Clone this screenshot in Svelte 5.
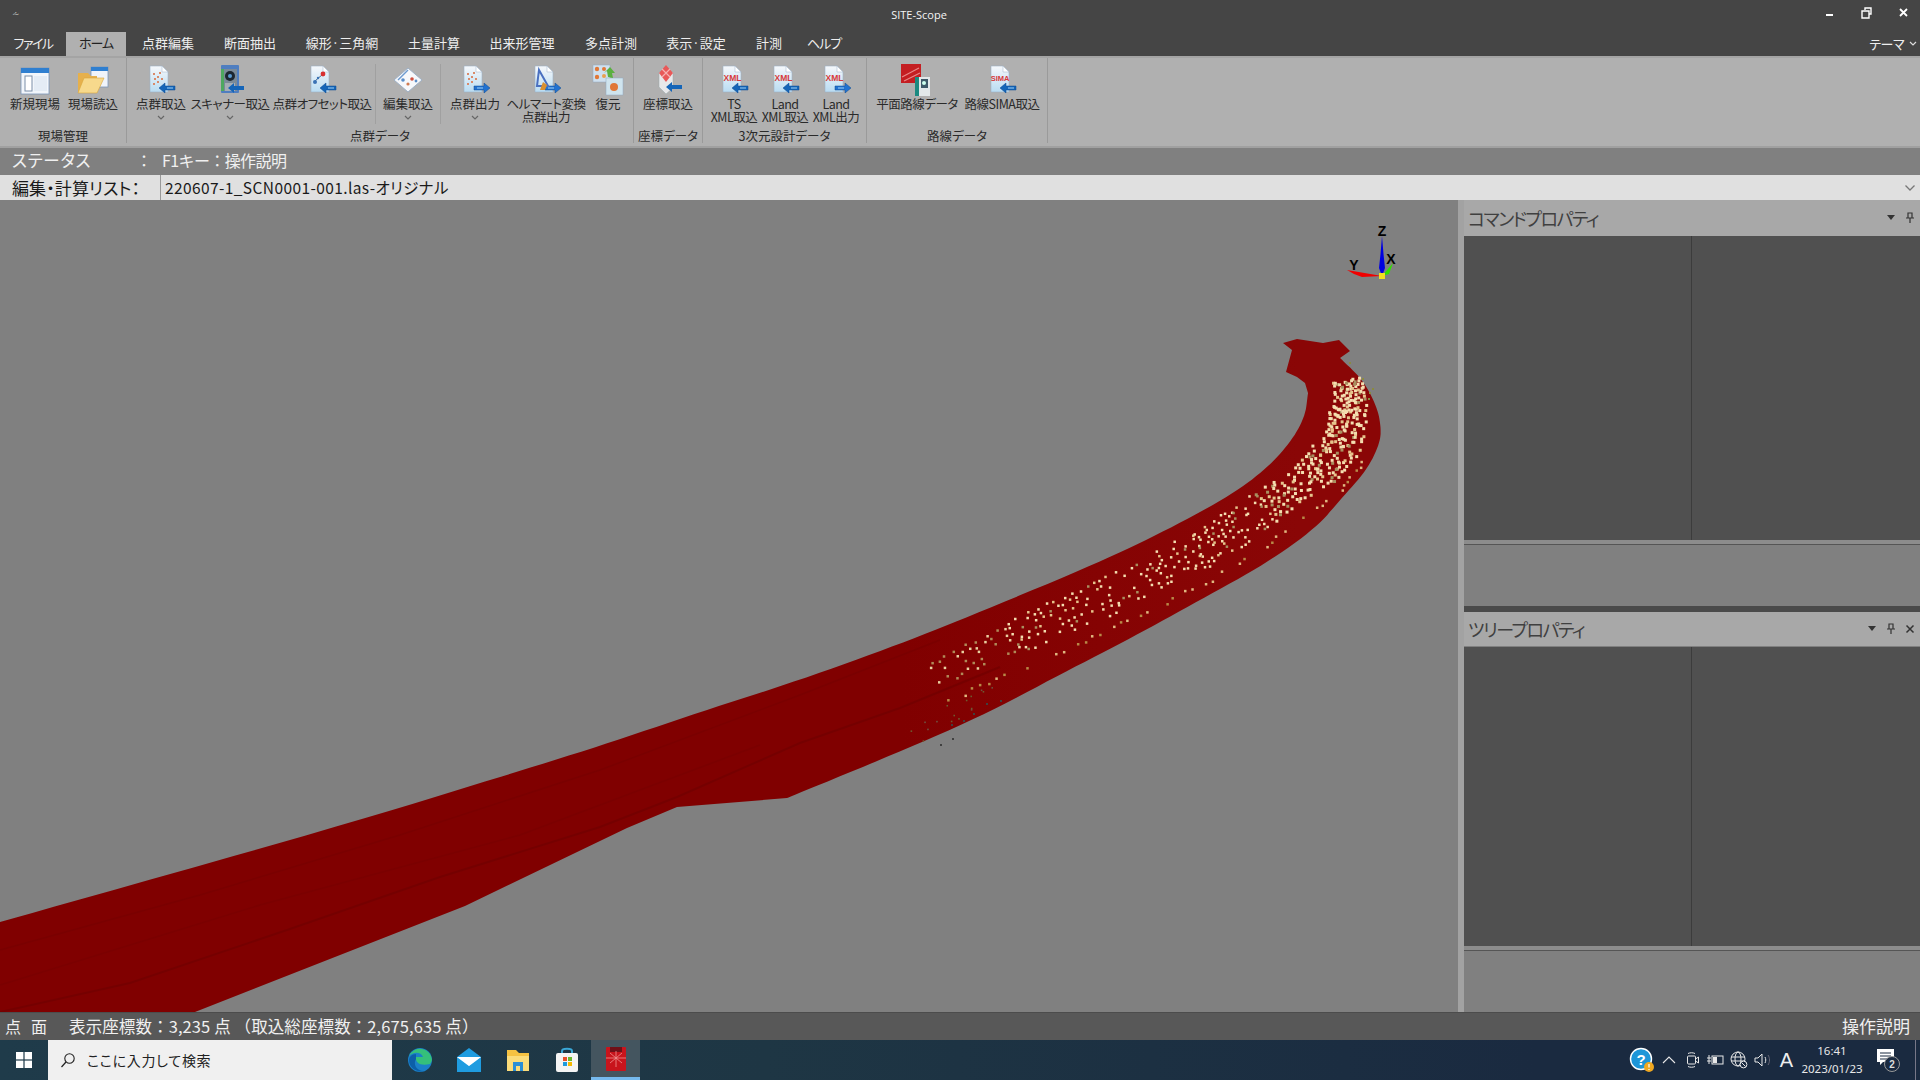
<script>
  const menu = [
    {t:'ファイル',w:66,n:1},{t:'ホーム',w:60,n:1},{t:'点群編集',w:84},{t:'断面抽出',w:80},{t:'線形·三角網',w:104},
    {t:'土量計算',w:80},{t:'出来形管理',w:96},{t:'多点計測',w:82},{t:'表示·設定',w:88},{t:'計測',w:58},{t:'ヘルプ',w:52,n:1}
  ];
  const groups = [
    { label:'現場管理', w:127, pad:6, items:[
      {w:58,k:'new',l:['新規現場']},{w:58,k:'open',l:['現場読込']}]},
    { label:'点群データ', w:507, pad:6, items:[
      {w:56,k:'cloudIn',l:['点群取込'],c:1},{w:82,k:'scan',l:['スキャナー取込'],c:1,t:1},{w:102,k:'offset',l:['点群オフセット取込'],t:1},
      {sep:1},{w:60,k:'edit',l:['編集取込'],c:1},{sep:1},{w:64,k:'cloudOut',l:['点群出力'],c:1},
      {w:78,k:'helm',l:['ヘルマート変換','点群出力'],t:1},{w:46,k:'restore',l:['復元']}]},
    { label:'座標データ', w:69, pad:4, items:[{w:60,k:'coord',l:['座標取込']}]},
    { label:'3次元設計データ', w:164, pad:6, items:[
      {w:50,k:'xmlIn',l:['TS','XML取込'],t:1},{w:52,k:'xmlIn',l:['Land','XML取込'],t:1},{w:50,k:'xmlOut',l:['Land','XML出力'],t:1}]},
    { label:'路線データ', w:181, pad:4, items:[{w:92,k:'plan',l:['平面路線データ'],t:1},{w:78,k:'sima',l:['路線SIMA取込'],t:1}]}
  ];

  const P = a => a.map(p => p.join(',')).join(' ');
  const chaikin = (pts, n = 3) => {
    let a = pts;
    for (let r = 0; r < n; r++) {
      const out = [a[0]];
      for (let i = 0; i < a.length - 1; i++) {
        const [x0,y0] = a[i], [x1,y1] = a[i+1];
        out.push([x0*.75+x1*.25, y0*.75+y1*.25], [x0*.25+x1*.75, y0*.25+y1*.75]);
      }
      out.push(a[a.length-1]);
      a = out;
    }
    return a.map(([x,y]) => [+x.toFixed(1), +y.toFixed(1)]);
  };
  const top = chaikin([[0,922],[344,825],[500,777],[600,746],[700,712],[800,680],[900,644],[980,612],[1100,562],[1167,530],[1233,494],[1267,468],[1290,443],[1305,417],[1308,393]]);
  const head = [[1305,383],[1297,377],[1286,372],[1292,350],[1283,343],[1297,339],[1323,343],[1339,340],[1350,351],[1340,358]];
  const bottom = chaikin([[1340,358],[1363,380],[1377,407],[1381,427],[1380,443],[1367,470],[1340,500],[1317,527],[1267,563],[1200,600],[1133,637],[1063,673],[980,717],[880,760],[787,798]]);
  const tail = [[677,807],[627,828],[465,906],[195,1012],[0,1012]];
  const road = P([...top, ...head, ...bottom, ...tail]);
  const streak1 = P([[0,1012],[130,983],[287,930],[440,877],[600,827],[677,797],[800,743],[900,708],[1000,667]]);
  const streak2 = P([[0,950],[200,895],[400,835],[600,770],[800,695],[940,640]]);
  const streak3 = P([[0,985],[260,905],[520,835],[760,745]]);

  let seed = 12345;
  const rnd = () => (seed = (seed * 16807) % 2147483647) / 2147483647;
  const line = [[935,672],[1013,637],[1113,593],[1200,550],[1267,507],[1317,470],[1343,437],[1350,410],[1345,380]];
  const half = [13,17,18,18,18,19,19,14];
  const dots = [];
  const total = line.length - 1;
  for (let i = 0; i < total; i++) {
    const [x0,y0] = line[i], [x1,y1] = line[i+1];
    const dx = x1-x0, dy = y1-y0, len = Math.hypot(dx,dy), nx = -dy/len, ny = dx/len;
    const f = i / (total - 1);
    const ds = 8 - 5*f, dw = 6 - 2.5*f, keep = .55 + .25*f;
    for (let s = 0; s < len; s += ds) {
      for (let o = -half[i]; o <= half[i]; o += dw) {
        if (rnd() > keep) continue;
        const px = x0 + dx*s/len + nx*o + (rnd()-.5)*5;
        const py = y0 + dy*s/len + ny*o + (rnd()-.5)*4;
        const r = rnd();
        const fill = i < 1 ? (r<.5?'#b08a58':'#e8d0a0') : r<.7?'#f4deb0':r<.88?'#e6c48c':'#a89060';
        dots.push({x:px, y:py, s:i>3?3:2.5, fill});
      }
    }
    if (i < 6) {
      for (let s = 0; s < len; s += ds*1.1) {
        if (rnd() > .6) continue;
        const o = 28 + rnd()*5;
        dots.push({x:x0+dx*s/len+nx*o, y:y0+dy*s/len+ny*o, s:2.5, fill:rnd()<.5?'#b88a48':'#e0b880'});
      }
    }
  }
  for (let j = 0; j < 16; j++) {
    const t = rnd();
    dots.push({x:905+t*85+rnd()*14, y:735-t*48+rnd()*20-10, s:1.6, fill:rnd()<.5?'#6e5a30':'#705040'});
  }
  const outer = [[940,744],[952,738],[951,724],[963,720],[973,713],[986,703],[1000,700],[1349,362],[1362,378],[1369,392],[1372,388],[1368,398]];
  for (const [x,y] of outer) dots.push({x,y,s:2,fill:x<1100?'#404040':'#8a8a40'});
  const windows = [[0,0],[1,0],[0,1],[1,1]];
</script>

{#snippet doc(arrow)}
  <path d="M5 2h12l6 6v20H5z" fill="url(#docg)" stroke="#9fb3c8" stroke-width=".6"/>
  <path d="M17 2v6h6z" fill="#fff" stroke="#9fb3c8" stroke-width=".5"/>
  {#if arrow === 'in'}
    <path d="M14 24l6-5v3h10v4H20v3z" fill="#1565b8" stroke="#0d4a90" stroke-width=".5"/>
    <path d="M22 24h6" stroke="#9cd0f5" stroke-width="1"/>
  {:else}
    <path d="M31 24l-6-5v3H15v4h10v3z" fill="#2272d0" stroke="#0d4a90" stroke-width=".5"/>
    <path d="M18 24h6" stroke="#9cd0f5" stroke-width="1"/>
  {/if}
{/snippet}

{#snippet icon(k)}
  <svg class="ic" viewBox="0 0 32 32" width="32" height="32">
    {#if k === 'new'}
      <rect x="2" y="4" width="28" height="26" fill="#f2f6fb" stroke="#7c97b8" stroke-width=".8"/>
      <rect x="2" y="4" width="28" height="5" fill="#2f7fd0"/>
      <rect x="6" y="12" width="7" height="15" fill="#fff" stroke="#7a8ea8"/>
      <rect x="15" y="12" width="13" height="15" fill="#e4ecf5"/>
    {:else if k === 'open'}
      <rect x="14" y="3" width="17" height="20" fill="#f0f4fa" stroke="#7c97b8" stroke-width=".8"/>
      <rect x="14" y="3" width="17" height="4" fill="#2f7fd0"/>
      <path d="M1 9h10l3 3h6v16H1z" fill="#e6b04c"/>
      <path d="M1 29l6-15h20l-7 15z" fill="#f7d98c" stroke="#d8a63c" stroke-width=".6"/>
    {:else if k === 'cloudIn' || k === 'cloudOut'}
      {@render doc(k === 'cloudIn' ? 'in' : 'out')}
      <g fill="#d98a6a"><rect x="8" y="9" width="2" height="2"/><rect x="12" y="12" width="2" height="2"/><rect x="9" y="14" width="2" height="2"/><rect x="14" y="8" width="2" height="2"/><rect x="16" y="14" width="2" height="2"/><rect x="8" y="19" width="2" height="2"/><rect x="12" y="17" width="2" height="2"/></g>
    {:else if k === 'scan'}
      <rect x="7" y="1" width="18" height="28" rx="1" fill="#4f7ec0"/>
      <rect x="7" y="5" width="3" height="22" fill="#4da860"/>
      <rect x="10" y="5" width="13" height="22" fill="#7a8a98"/>
      <circle cx="16" cy="12" r="5" fill="#1c2630"/><circle cx="16" cy="12" r="2" fill="#5a9ad0"/>
      <rect x="11" y="19" width="10" height="8" fill="#a5adb5"/>
      <path d="M14 24l6-5v3h10v4H20v3z" fill="#1565b8"/>
    {:else if k === 'offset'}
      {@render doc('in')}
      <path d="M9 17l8-7" stroke="#4a6a90" stroke-width="1"/>
      <circle cx="9" cy="18" r="2" fill="#3a72b5"/><circle cx="17" cy="10" r="2.4" fill="#d83030"/><circle cx="12" cy="14" r="1.2" fill="#3a72b5"/>
    {:else if k === 'edit'}
      <path d="M16 4L30 16 16 28 2 16z" fill="#f6f8fb" stroke="#9db0c6"/>
      <path d="M16 6L6 16" stroke="#6c9ad0" stroke-width="1.5"/>
      <circle cx="11" cy="16" r="1.8" fill="#5c8ec8"/><circle cx="20" cy="15" r="1.8" fill="#d05040"/><circle cx="16" cy="20" r="1.6" fill="#d07a50"/><circle cx="24" cy="17" r="1.4" fill="#5c8ec8"/>
    {:else if k === 'helm'}
      {@render doc('out')}
      <path d="M9 6l9 16H7z" fill="none" stroke="#4a70c0" stroke-width="2"/>
      <path d="M10 26l3-8 4 3-2 5z" fill="#d89030"/>
    {:else if k === 'restore'}
      <rect x="1" y="1" width="17" height="17" fill="#cfe0ee" stroke="#90a8c0" stroke-width=".5"/>
      <circle cx="5" cy="5" r="2.2" fill="#e07838"/><circle cx="12" cy="5" r="2" fill="#e07838"/><circle cx="5" cy="13" r="2.2" fill="#e07838"/><circle cx="12" cy="12" r="2" fill="#e8a050"/>
      <rect x="14" y="14" width="17" height="17" fill="#cfe4ee" stroke="#90a8c0" stroke-width=".5"/>
      <circle cx="22" cy="23" r="4" fill="#e07838"/>
      <path d="M16 13l-1-6 -3 2 6-6 5 6h-3l1 5z" fill="#5ab040"/>
    {:else if k === 'coord'}
      <path d="M7 8h14v16l-7 6-7-7z" fill="#e8e8ea" stroke="#9aa" stroke-width=".5"/>
      <path d="M14 1l7 8-7 9-7-9z" fill="#e85858"/><path d="M10 5l8 8M18 5l-8 8" stroke="#f6b0b0" stroke-width="1.2"/>
      <path d="M14 23l6-5v3h10v4H20v3z" fill="#1565b8"/>
    {:else if k === 'xmlIn' || k === 'xmlOut'}
      {@render doc(k === 'xmlIn' ? 'in' : 'out')}
      <text x="14.5" y="17" class="svgt" text-anchor="middle">XML</text>
    {:else if k === 'sima'}
      {@render doc('in')}
      <text x="14" y="17" class="svgt sm" text-anchor="middle">SIMA</text>
    {:else if k === 'plan'}
      <rect x="0" y="0" width="20" height="19" fill="#c41e22"/>
      <path d="M1 13L18 4M3 17L19 9" stroke="#e88888" stroke-width="1.2"/>
      <rect x="14" y="13" width="15" height="19" fill="#e2e8ea"/>
      <rect x="14" y="13" width="4" height="19" fill="#1c8a80"/>
      <rect x="20" y="15" width="7" height="9" fill="#3c5868"/>
      <circle cx="23" cy="19" r="2" fill="#cfe"/>
    {/if}
  </svg>
{/snippet}

<svg class="defs" width="0" height="0" aria-hidden="true">
  <defs>
    <linearGradient id="docg" x1="0" y1="0" x2="0" y2="1"><stop offset="0" stop-color="#f6f8fb"/><stop offset="1" stop-color="#b9dcf2"/></linearGradient>
    <linearGradient id="roadg" gradientUnits="userSpaceOnUse" x1="900" y1="0" x2="1300" y2="0"><stop offset="0" stop-color="#800000"/><stop offset="1" stop-color="#8a0606"/></linearGradient>
  </defs>
</svg>

<div class="app">
  <header class="title">
    <span class="qa">⩪</span>
    <span class="name">SITE-Scope</span>
    <div class="winctl">
      <svg viewBox="0 0 12 12" width="12" height="12"><path d="M2 8h7" stroke="#fff" stroke-width="2"/></svg>
      <svg viewBox="0 0 12 12" width="12" height="12"><path d="M4 3V1h6v6H8M1 4h7v7H1z" fill="none" stroke="#fff" stroke-width="1.4"/></svg>
      <svg viewBox="0 0 12 12" width="12" height="12"><path d="M2 2l7 7M9 2l-7 7" stroke="#fff" stroke-width="1.8"/></svg>
    </div>
  </header>

  <nav class="menu">
    {#each menu as m, i}
      <span class="tab" class:active={i === 1} class:narrow={m.n} style:width="{m.w}px">{m.t}</span>
    {/each}
    <span class="theme">テーマ <svg viewBox="0 0 8 6" width="8" height="6"><path d="M1 1l3 3 3-3" fill="none" stroke="#ddd" stroke-width="1.2"/></svg></span>
  </nav>

  <section class="ribbon">
    {#each groups as g}
      <div class="group" style:width="{g.w}px">
        <div class="btns" style:padding-left="{g.pad}px">
          {#each g.items as b}
            {#if b.sep}
              <i class="sep"></i>
            {:else}
              <div class="btn" style:width="{b.w}px">
                {@render icon(b.k)}
                <span class="bl" class:tight={b.t}>{#each b.l as t, n}{#if n}<br/>{/if}{t}{/each}</span>
                {#if b.c}
                  <svg class="chev" viewBox="0 0 8 6" width="8" height="6"><path d="M1 1l3 3 3-3" fill="none" stroke="#666" stroke-width="1.2"/></svg>
                {/if}
              </div>
            {/if}
          {/each}
        </div>
        <div class="gl">{g.label}</div>
      </div>
    {/each}
  </section>

  <div class="stat">
    <span class="k">ステータス</span><span class="c">&#xFF1A;</span><span class="v">F1キー&#xFF1A;操作説明</span>
  </div>
  <div class="list">
    <span class="lk">編集・計算リスト&#xFF1A;</span>
    <span class="lv">220607-1_SCN0001-001.las-オリジナル</span>
    <svg viewBox="0 0 12 8" width="12" height="8"><path d="M1.5 1.5L6 6l4.5-4.5" fill="none" stroke="#777" stroke-width="1.3"/></svg>
  </div>

  <main class="work">
    <div class="view">
      <svg class="scene" viewBox="0 200 1458 812" width="1458" height="812">
        <polygon points={road} fill="url(#roadg)"/>
        <polyline points={streak1} fill="none" stroke="#6e0000" stroke-width="2" opacity=".6"/>
        <polyline points={streak2} fill="none" stroke="#740000" stroke-width="1.5" opacity=".5"/>
        <polyline points={streak3} fill="none" stroke="#760000" stroke-width="1.5" opacity=".5"/>
        {#each dots as d}
          <rect x={d.x} y={d.y} width={d.s} height={d.s} fill={d.fill}/>
        {/each}
        <g>
          <path d="M1382 236l1.5 18 1.5 14-3 8-3-8 1.5-14z" fill="#0000e0"/>
          <path d="M1347 270l35 6-20 1-8-3z" fill="#f00000"/>
          <path d="M1382 276l11-13-4 11z" fill="#30e000"/>
          <rect x="1379" y="273" width="6" height="6" fill="#f0e020"/>
          <text x="1382" y="236" class="ax" text-anchor="middle">Z</text>
          <text x="1354" y="270" class="ax" text-anchor="middle">Y</text>
          <text x="1391" y="264" class="ax" text-anchor="middle">X</text>
        </g>
      </svg>
    </div>
    <div class="split"></div>
    <aside class="side">
      <div class="ptitle top"><span>コマンドプロパティ</span>
        <div class="pctl"><svg viewBox="0 0 10 6" width="10" height="6"><path d="M1 0h8L5 5z" fill="#333"/></svg>
        <svg viewBox="0 0 10 12" width="10" height="12"><path d="M3 1h4v5H3zM1 6h8M5 6v5" fill="none" stroke="#333" stroke-width="1.2"/></svg></div>
      </div>
      <div class="pbody b1"><i></i></div>
      <div class="band"></div>
      <div class="pgray g1"></div>
      <div class="dark"></div>
      <div class="ptitle"><span>ツリープロパティ</span>
        <div class="pctl"><svg viewBox="0 0 10 6" width="10" height="6"><path d="M1 0h8L5 5z" fill="#333"/></svg>
        <svg viewBox="0 0 10 12" width="10" height="12"><path d="M3 1h4v5H3zM1 6h8M5 6v5" fill="none" stroke="#333" stroke-width="1.2"/></svg>
        <svg viewBox="0 0 10 10" width="10" height="10"><path d="M1.5 1.5l7 7M8.5 1.5l-7 7" stroke="#333" stroke-width="1.5"/></svg></div>
      </div>
      <div class="pbody b2"><i></i></div>
      <div class="band"></div>
      <div class="pgray g2"></div>
    </aside>
  </main>

  <footer class="status">
    <span class="pm">点</span><span class="pm">面</span>
    <span class="count">表示座標数&#xFF1A;3,235 点 &#xFF08;取込総座標数&#xFF1A;2,675,635 点&#xFF09;</span>
    <span class="help">操作説明</span>
  </footer>

  <div class="taskbar">
    <div class="start">
      <svg viewBox="0 0 16 16" width="16" height="16">
        {#each windows as w}<rect x={w[0]*8.6} y={w[1]*8.6} width="7.4" height="7.4" fill="#fff"/>{/each}
      </svg>
    </div>
    <div class="search">
      <svg viewBox="0 0 16 16" width="16" height="16"><circle cx="9.5" cy="6.5" r="4.7" fill="none" stroke="#222" stroke-width="1.1"/><path d="M6 10l-4.5 5" stroke="#222" stroke-width="1.2"/></svg>
      <span>ここに入力して検索</span>
    </div>
    <div class="tbi">
      <svg viewBox="0 0 26 26" width="26" height="26"><circle cx="13" cy="13" r="12" fill="#1b80c8"/><path d="M25 13a12 12 0 0 0-23-4c3-4 12-5 14 1H9c-1 7 6 9 14 7a12 12 0 0 0 2-4z" fill="#35c07a"/><path d="M9 12c-3 5 0 12 8 12-7 2-15-3-15-11 0-3 3-6 7-6z" fill="#0c5fa8"/></svg>
    </div>
    <div class="tbi">
      <svg viewBox="0 0 26 26" width="26" height="26"><path d="M1 10L13 1l12 9v15H1z" fill="#1f9ce0"/><path d="M1 10l12 9 12-9" fill="#7ad0f5"/><path d="M1 10h24L13 19z" fill="#fff"/></svg>
    </div>
    <div class="tbi">
      <svg viewBox="0 0 26 26" width="26" height="26"><path d="M2 3h9l3 3h10v18H2z" fill="#f5c242"/><rect x="2" y="9" width="22" height="15" fill="#fbdc7a"/><rect x="8" y="15" width="10" height="9" fill="#2a8ed6"/><rect x="11" y="19" width="4" height="5" fill="#fbdc7a"/></svg>
    </div>
    <div class="tbi">
      <svg viewBox="0 0 26 26" width="26" height="26"><path d="M8 7V4c0-3 10-3 10 0v3" fill="none" stroke="#3aa8d8" stroke-width="2"/><rect x="2" y="6" width="22" height="19" rx="2" fill="#f4f4f4"/><rect x="9" y="10" width="4" height="4" fill="#e8502a"/><rect x="14" y="10" width="4" height="4" fill="#6cb82c"/><rect x="9" y="15" width="4" height="4" fill="#1d9ade"/><rect x="14" y="15" width="4" height="4" fill="#f5b800"/></svg>
    </div>
    <div class="tbi on">
      <svg viewBox="0 0 26 26" width="26" height="28"><rect x="3" y="1" width="20" height="24" rx="1" fill="#c8141c"/><rect x="7" y="1" width="12" height="5" fill="#701018"/><path d="M3 12h20M13 5v16M7 7l12 10M19 7L7 17" stroke="#f09090" stroke-width=".8"/></svg>
    </div>
    <div class="tray">
      <svg viewBox="0 0 26 26" width="26" height="26"><circle cx="12" cy="12" r="10.5" fill="#1e96d8" stroke="#fff" stroke-width="1.4"/><text x="12" y="18" class="q" text-anchor="middle">?</text><circle cx="20" cy="20" r="5" fill="#f0a820"/><path d="M20 17v3.5M20 22v1" stroke="#fff" stroke-width="1.2"/></svg>
      <svg class="t-up" viewBox="0 0 14 8" width="14" height="8"><path d="M1 7l6-6 6 6" fill="none" stroke="#e8e8e8" stroke-width="1.1"/></svg>
      <svg class="t-cam" viewBox="0 0 14 16" width="14" height="16"><rect x="1.5" y="4" width="8" height="8" rx="1" fill="none" stroke="#e8e8e8"/><path d="M9.5 7l3-2v6l-3-2M2 1.5c2-1 5-1 7 0M2 14.5c2 1 5 1 7 0" fill="none" stroke="#e8e8e8"/></svg>
      <svg class="t-n" viewBox="0 0 18 14" width="18" height="14"><rect x="6" y="3" width="11" height="8" fill="none" stroke="#e8e8e8"/><rect x="7" y="4" width="4" height="6" fill="#e8e8e8"/><path d="M1 5h4M1 8h4M3 2v9" stroke="#e8e8e8"/></svg>
      <svg class="t-n" viewBox="0 0 18 18" width="18" height="18"><circle cx="8" cy="8" r="7" fill="none" stroke="#e8e8e8"/><ellipse cx="8" cy="8" rx="3" ry="7" fill="none" stroke="#e8e8e8"/><path d="M1 6h14M1 10h14" stroke="#e8e8e8"/><circle cx="13.5" cy="13.5" r="3.4" fill="#1a2a40" stroke="#e8e8e8"/><path d="M11.5 11.5l4 4" stroke="#e8e8e8"/></svg>
      <svg class="t-n" viewBox="0 0 18 14" width="18" height="14"><path d="M1 5h3l4-4v12l-4-4H1z" fill="none" stroke="#e8e8e8"/><path d="M11 4c1 2 1 4 0 6" fill="none" stroke="#e8e8e8"/><path d="M14 2c2 3 2 7 0 10" fill="none" stroke="#667"/></svg>
      <span class="ime">A</span>
      <div class="clock"><span>16:41</span><span>2023/01/23</span></div>
      <svg class="note" viewBox="0 0 26 26" width="26" height="26"><path d="M2 2h17v13H8l-3 3v-3H2z" fill="#fff"/><path d="M5 6h11M5 9h11M5 12h8" stroke="#1a2a40"/><circle cx="17" cy="17" r="7.5" fill="#1a2a40" stroke="#999"/><text x="17" y="21" class="nn" text-anchor="middle">2</text></svg>
      <i class="desk"></i>
    </div>
  </div>
</div>

<style>
  :global(body) { margin: 0; background: #454545; overflow: hidden; }
  .defs { position: absolute; }
  .app {
    width: 1920px; height: 1080px; display: flex; flex-direction: column; overflow: hidden;
    font-family: "Noto Sans CJK JP", "Noto Sans", sans-serif; font-feature-settings: "palt"; color: #222;
  }
  .title { flex: none; background: #454545; display: flex; align-items: center; position: relative; padding: 0 0 6px 0; box-sizing: border-box; height: 32px; }
  .qa { color: #bbb; font-size: 9px; margin-left: 12px; }
  .name { position: absolute; left: 0; width: 1838px; top: 7px; text-align: center; color: #f4f4f4; font: 11px/16px "Open Sans", sans-serif; }
  .winctl { margin-left: auto; display: flex; gap: 25px; padding-right: 10px; align-items: center; }
  .menu { height: 24px; flex: none; background: #454545; display: flex; position: relative; }
  .tab { flex: none; box-sizing: border-box; text-align: center; font-size: 13px; line-height: 22px; color: #eee; white-space: nowrap; }
  .tab.narrow { letter-spacing: -1px; }
  .tab:first-child { letter-spacing: -1.5px; }
  .tab.active { background: #b0b0b0; color: #222; }
  .theme { margin-left: auto; color: #eee; font-size: 13px; line-height: 22px; padding-right: 3px; display: flex; gap: 5px; align-items: center; letter-spacing: -.5px; }
  .ribbon { height: 92px; flex: none; background: #b0b0b0; display: flex; box-sizing: border-box; border-top: 2px solid #a4a4a4; border-bottom: 2px solid #a0a0a0; }
  .group { flex: none; box-sizing: border-box; border-right: 1px solid #9a9a9a; display: flex; flex-direction: column; margin-bottom: 3px; }
  .btns { height: 70px; display: flex; box-sizing: border-box; padding-top: 6px; flex: none; }
  .btn { flex: none; display: flex; flex-direction: column; align-items: center; }
  .ic { flex: none; margin-bottom: 2px; }
  .bl { font-size: 12.5px; line-height: 12.5px; white-space: nowrap; color: #2a2a2a; text-align: center; }
  .bl.tight { letter-spacing: -.5px; }
  .chev { margin-top: 4px; }
  .sep { flex: none; width: 1px; height: 60px; background: #a0a0a0; margin: 0 2px; }
  .gl { text-align: center; font-size: 12.5px; line-height: 16px; color: #2a2a2a; }
  .svgt { font: 700 8.5px "Liberation Sans", sans-serif; fill: #d83a3a; }
  .svgt.sm { font-size: 7.5px; }
  .stat { height: 27px; flex: none; background: #808080; color: #f0f0f0; display: flex; align-items: center; font-size: 16px; padding: 0 0 3px 12px; box-sizing: border-box; }
  .stat .k { width: 128px; font-size: 16.5px; letter-spacing: .8px; }
  .stat .c { width: 22px; }
  .stat .v { font-feature-settings: normal; letter-spacing: -.6px; }
  .list { height: 25px; flex: none; background: #e0e0e0; display: flex; align-items: center; font-size: 17px; padding: 0 4px 0 12px; box-sizing: border-box; color: #1a1a1a; }
  .lk { width: 148px; flex: none; letter-spacing: .1px; white-space: nowrap; }
  .lv { flex: 1; padding-left: 4px; border-left: 1px solid #999; line-height: 25px; font-size: 15.5px; letter-spacing: .4px; }
  .work { height: 812px; flex: none; display: flex; }
  .view { width: 1458px; flex: none; background: #808080; }
  .scene { display: block; }
  .ax { font: 700 14px "Liberation Sans", sans-serif; fill: #000; }
  .split { width: 6px; flex: none; background: #a2a2a2; }
  .side { flex: 1; display: flex; flex-direction: column; background: #808080; }
  .ptitle { height: 34px; flex: none; background: #a8a8a8; display: flex; align-items: center; justify-content: space-between; padding: 0 5px 0 4px; font-size: 18px; color: #404040; letter-spacing: -1.5px; }
  .ptitle.top { height: 36px; }
  .pctl { display: flex; align-items: center; gap: 9px; }
  .pbody { flex: none; background: #505050; }
  .pbody i { display: block; width: 228px; height: 100%; box-sizing: border-box; border-right: 1px solid #3c3c3c; }
  .b1 { height: 304px; }
  .b2 { height: 299px; margin-top: 1px; }
  .band { height: 4px; flex: none; background: #8c8c8c; border-bottom: 1px solid #555; }
  .pgray { flex: none; background: #808080; }
  .g1 { height: 61px; }
  .g2 { flex: 1; }
  .dark { height: 6px; flex: none; background: #4a4a4a; }
  .status { height: 28px; flex: none; background: #585858; color: #f0f0f0; display: flex; align-items: center; font-size: 16px; padding: 0 10px 2px 5px; border-top: 1px solid #4c4c4c; box-sizing: border-box; }
  .pm { margin-right: 10px; }
  .count { margin-left: 12px; font-feature-settings: normal; font-size: 16.5px; letter-spacing: .1px; }
  .help { margin-left: auto; font-size: 17px; }
  .taskbar { flex: 1; display: flex; align-items: stretch; background: linear-gradient(90deg, #1f3b4a, #1e3644 40%, #1a2a40 80%); }
  .start { width: 48px; display: flex; align-items: center; justify-content: center; flex: none; }
  .search { width: 344px; flex: none; background: #f0f0f0; display: flex; align-items: center; gap: 11px; padding-left: 12px; margin-right: 3px; box-sizing: border-box; font-size: 14px; letter-spacing: .7px; color: #222; }
  .tbi { width: 49px; flex: none; display: flex; align-items: center; justify-content: center; box-sizing: border-box; }
  .tbi.on { background: #44555f; border-bottom: 3px solid #76b9ed; }
  .tray { margin-left: auto; display: flex; align-items: center; gap: 7px; color: #eee; padding-right: 4px; }
  .t-up { margin-left: 0; }
  .t-cam { margin-left: 3px; }
  .t-n { margin-left: -1px; }
  .ime { font: 20px "Liberation Sans", sans-serif; margin-left: 1px; }
  .clock { display: flex; flex-direction: column; align-items: center; font: 11.5px/18px "Noto Sans", sans-serif; color: #e8e8e8; width: 60px; margin-left: 2px; }
  .note { margin-left: 6px; }
  .desk { width: 1px; height: 40px; background: #778; margin-left: 7px; }
  .q { font: 700 15px "Liberation Sans", sans-serif; fill: #fff; }
  .nn { font: 700 10px "Liberation Sans", sans-serif; fill: #ddd; }
</style>
